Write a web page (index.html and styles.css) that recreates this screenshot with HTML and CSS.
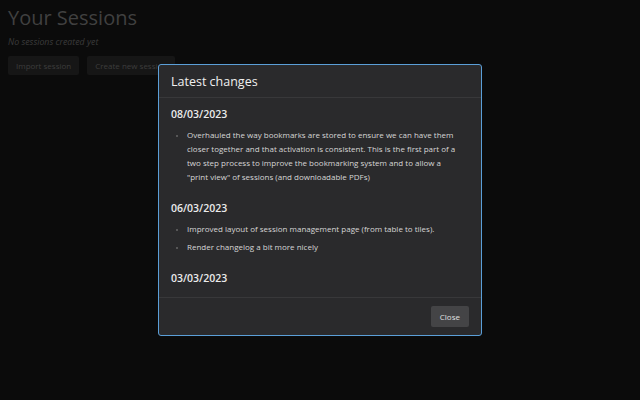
FILE: index.html
```html
<!DOCTYPE html>
<html>
<head>
<meta charset="utf-8">
<link rel="stylesheet" href="styles.css">
</head>
<body>
<main class="page">
  <h1 class="title">Your Sessions</h1>
  <p class="empty">No sessions created yet</p>
  <div class="actions">
    <button class="btn">Import session</button>
    <button class="btn">Create new session</button>
  </div>
</main>
<div class="overlay">
  <div class="modal">
    <div class="modal-header">Latest changes</div>
    <div class="modal-body">
      <h2 class="date">08/03/2023</h2>
      <ul class="changes">
        <li>Overhauled the way bookmarks are stored to ensure we can have them closer together and that activation is consistent. This is the first part of a two step process to improve the bookmarking system and to allow a "print view" of sessions (and downloadable PDFs)</li>
      </ul>
      <h2 class="date">06/03/2023</h2>
      <ul class="changes">
        <li>Improved layout of session management page (from table to tiles).</li>
        <li>Render changelog a bit more nicely</li>
      </ul>
      <h2 class="date">03/03/2023</h2>
      <ul class="changes">
        <li>Bookmark pages now belong to a viewpoint. Meaning that you can now have multiple viewpoints with their own bookmarks.</li>
      </ul>
    </div>
    <div class="modal-footer">
      <button class="close">Close</button>
    </div>
  </div>
</div>
</body>
</html>
```
FILE: styles.css
```css
html, body {
  margin: 0;
  padding: 0;
  height: 100%;
}
body {
  background: #0b0b0b;
  font-family: "Open Sans", "Noto Sans", sans-serif;
  color: #3e3e3e;
  overflow: hidden;
}
.page {
  padding: 5px 8px;
}
.title {
  margin: 0;
  font-size: 20px;
  font-weight: 400;
  line-height: 26px;
  color: #404040;
}
.empty {
  margin: 5px 0 0;
  font-size: 8.8px;
  line-height: 12px;
  font-style: italic;
  color: #3b3b3b;
}
.actions {
  display: flex;
  gap: 8px;
  margin-top: 8px;
}
.btn {
  font-family: inherit;
  font-size: 8px;
  color: #3d3d3d;
  background: #161616;
  border: none;
  border-radius: 2px;
  height: 19px;
  padding: 0 8px;
}
.overlay {
  position: fixed;
  inset: 0;
  display: flex;
  justify-content: center;
  align-items: flex-start;
}
.modal {
  margin-top: 64px;
  width: 322px;
  height: 270px;
  background: #2a2a2c;
  border: 1px solid #5b9fd8;
  border-radius: 3px;
  display: flex;
  flex-direction: column;
  color: #dcdcdc;
}
.modal-header {
  height: 32px;
  padding: 0 12px;
  display: flex;
  align-items: center;
  font-size: 12.5px;
  color: #f0f0f0;
  border-bottom: 1px solid #38383a;
}
.modal-body {
  flex: 1;
  overflow: hidden;
  padding: 9px 12px 0;
}
.date {
  margin: 0;
  font-size: 10.5px;
  font-weight: 600;
  line-height: 14px;
  color: #ececec;
}
.changes {
  margin: 7px 6px 17px 0;
  padding-left: 16px;
  font-size: 8px;
  line-height: 14px;
  color: #d6d6d6;
}
.changes li {
  margin-bottom: 4px;
}
.changes li::marker {
  color: #666;
  font-size: 6px;
}
.modal-footer {
  height: 37px;
  border-top: 1px solid #38383a;
  display: flex;
  justify-content: flex-end;
  align-items: center;
  padding: 0 12px;
}
.close {
  font-family: inherit;
  font-size: 8px;
  color: #e0e0e0;
  background: #444446;
  border: none;
  border-radius: 2px;
  height: 21px;
  padding: 0 9px;
}
```
